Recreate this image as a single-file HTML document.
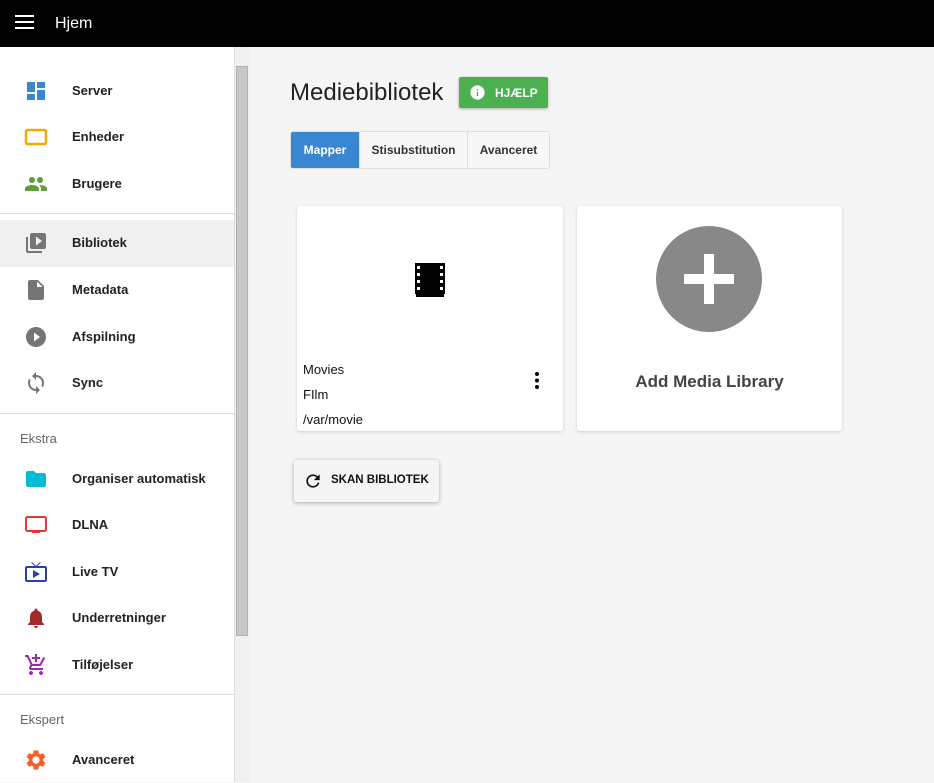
<!DOCTYPE html>
<html><head><meta charset="utf-8"><style>
*{box-sizing:border-box;margin:0;padding:0}
body{width:934px;height:782px;overflow:hidden;font-family:"Liberation Sans",sans-serif;background:#f5f5f5;position:relative}
.top{position:absolute;left:0;top:0;width:934px;height:47px;background:#000;color:#fff}
.top .t{position:absolute;left:55px;top:15px;font-size:16px}
.side{position:absolute;left:0;top:47px;width:234px;height:735px;background:#fff}
.sb{position:absolute;left:234px;top:47px;width:16px;height:735px;background:#f0f0f0;border-left:1px solid #ddd}
.thumb{position:absolute;left:236px;top:66px;width:12px;height:570px;background:#c8c8c8;border:1px solid #b0b0b0}
.it{position:absolute;left:0;width:234px;height:46px}
.it .ic{position:absolute;left:24px;top:11px;width:24px;height:24px}
.it span{position:absolute;left:72px;top:15px;font-size:13px;font-weight:bold;color:#222}
.hl{background:#f0f0f0}
.dv{position:absolute;left:0;width:234px;height:1px;background:#ddd}
.hd{position:absolute;left:20px;font-size:13px;color:#666}
h1{position:absolute;left:290px;top:79px;font-size:24px;font-weight:normal;color:#222}
.help{position:absolute;left:459px;top:77px;width:89px;height:31px;background:#4caf50;color:#fff;font-size:12px;font-weight:bold;border-radius:2px;box-shadow:0 1px 3px rgba(0,0,0,.3)}
.help span{position:absolute;left:36px;top:9px}
.tabs{position:absolute;left:290px;top:131px;height:38px;border:1px solid #ddd;border-radius:3px;background:#f7f7f7;display:flex;font-size:12px;font-weight:bold;color:#333}
.tabs div{line-height:36px;text-align:center;border-right:1px solid #ddd}
.card{position:absolute;background:#fff;border-radius:3px;box-shadow:0 1px 3px rgba(0,0,0,.15)}
.ct{position:absolute;left:6px;font-size:13px;color:#111}
.scan{position:absolute;left:294px;top:460px;width:145px;height:42px;background:#f5f5f5;border-radius:2px;box-shadow:0 1px 4px rgba(0,0,0,.3);font-size:11.5px;font-weight:bold;color:#111}
</style></head><body>
<div class="top">
<svg style="position:absolute;left:15px;top:14px" width="20" height="16"><rect y="1" width="19" height="2" fill="#fff"/><rect y="7" width="19" height="2" fill="#fff"/><rect y="13" width="19" height="2" fill="#fff"/></svg>
<div class="t">Hjem</div></div>
<div class="side">
<div class="it" style="top:21px"><svg class="ic" viewBox="0 0 24 24"><path fill="#3a87d1" d="M3 13h8V3H3v10zm0 8h8v-6H3v6zm10 0h8V11h-8v10zm0-18v6h8V3h-8z"/></svg><span>Server</span></div>
<div class="it" style="top:67px"><svg class="ic" viewBox="0 0 24 24"><rect x="2" y="5" width="20" height="14" rx="1.5" fill="none" stroke="#f0a800" stroke-width="2.5"/></svg><span>Enheder</span></div>
<div class="it" style="top:114px"><svg class="ic" viewBox="0 0 24 24"><path fill="#5c9e3a" d="M16 11c1.66 0 3-1.34 3-3s-1.34-3-3-3-3 1.340-3 3 1.34 3 3 3zm-8 0c1.66 0 3-1.34 3-3S9.66 5 8 5 5 6.34 5 8s1.34 3 3 3zm0 2c-2.33 0-7 1.17-7 3.5V19h14v-2.5c0-2.33-4.67-3.5-7-3.5zm8 0c-.29 0-.62.02-.97.05 1.16.84 1.970 1.97 1.97 3.45V19h6v-2.5c0-2.33-4.67-3.5-7-3.5z"/></svg><span>Brugere</span></div>
<div class="dv" style="top:166px"></div>
<div class="it hl" style="top:173px;height:47px"><svg class="ic" viewBox="0 0 24 24"><path fill="#757575" d="M4 6H2v14c0 1.1.9 2 2 2h14v-2H4V6zm16-4H8c-1.1 0-2 .9-2 2v12c0 1.1.9 2 2 2h12c1.1 0 2-.9 2-2V4c0-1.1-.9-2-2-2zm-8 12.5v-9l6 4.5-6 4.5z"/></svg><span>Bibliotek</span></div>
<div class="it" style="top:220px"><svg class="ic" viewBox="0 0 24 24"><path fill="#757575" d="M6 2c-1.1 0-2 .9-2 2v16c0 1.1.9 2 2 2h12c1.1 0 2-.9 2-2V8l-6-6H6zm7 7V3.5L18.5 9H13z"/></svg><span>Metadata</span></div>
<div class="it" style="top:267px"><svg class="ic" viewBox="0 0 24 24"><path fill="#757575" d="M12 2C6.48 2 2 6.48 2 12s4.48 10 10 10 10-4.48 10-10S17.52 2 12 2zm-2 14.5v-9l6 4.5-6 4.5z"/></svg><span>Afspilning</span></div>
<div class="it" style="top:313px"><svg class="ic" viewBox="0 0 24 24"><path fill="#757575" d="M12 4V1L8 5l4 4V6c3.31 0 6 2.69 6 6 0 1.01-.25 1.97-.7 2.8l1.46 1.46C19.54 15.03 20 13.57 20 12c0-4.42-3.58-8-8-8zm0 14c-3.31 0-6-2.69-6-6 0-1.010.25-1.97.7-2.8L5.24 7.74C4.46 8.97 4 10.43 4 12c0 4.42 3.58 8 8 8v3l4-4-4-4v3z"/></svg><span>Sync</span></div>
<div class="dv" style="top:366px"></div>
<div class="hd" style="top:384px">Ekstra</div>
<div class="it" style="top:409px"><svg class="ic" viewBox="0 0 24 24"><path fill="#00bcd4" d="M10 4H4c-1.1 0-2 .9-2 2v12c0 1.1.9 2 2 2h16c1.1 0 2-.9 2-2V8c0-1.1-.9-2-2-2h-8l-2-2z"/></svg><span>Organiser automatisk</span></div>
<div class="it" style="top:455px"><svg class="ic" viewBox="0 0 24 24"><rect x="2" y="4" width="20" height="14" rx="1.5" fill="none" stroke="#e53935" stroke-width="2"/><rect x="8" y="18" width="8" height="2" fill="#e53935"/></svg><span>DLNA</span></div>
<div class="it" style="top:502px"><svg class="ic" viewBox="0 0 24 24"><path fill="#2c3ea8" d="M21 6h-7.59l3.29-3.29L16 2l-4 4-4-4-.71.71L10.59 6H3c-1.1 0-2 .89-2 2v12c0 1.1.9 2 2 2h18c1.1 0 2-.9 2-2V8c0-1.11-.9-2-2-2zm0 14H3V8h18v12zM9 10v8l7-4z"/></svg><span>Live TV</span></div>
<div class="it" style="top:548px"><svg class="ic" viewBox="0 0 24 24"><path fill="#a52a2a" d="M12 22c1.1 0 2-.9 2-2h-4c0 1.1.89 2 2 2zm6-6v-5c0-3.07-1.64-5.64-4.5-6.32V4c0-.83-.67-1.5-1.5-1.5s-1.5.67-1.5 1.5v.68C7.63 5.36 6 7.92 6 11v5l-2 2v1h16v-1l-2-2z"/></svg><span>Underretninger</span></div>
<div class="it" style="top:595px"><svg class="ic" viewBox="0 0 24 24"><path fill="#9c27b0" d="M11 9h2V6h3V4h-3V1h-2v3H8v2h3v3zm-4 9c-1.1 0-1.99.9-1.99 2S5.9 22 7 22s2-.9 2-2-.9-2-2-2zm10 0c-1.1 0-1.99.9-1.990 2s.89 2 1.99 2 2-.9 2-2-.9-2-2-2zm-9.83-3.25l.03-.12.9-1.63h7.45c.75 0 1.41-.41 1.75-1.03l3.86-7.01L19.42 4h-.01l-1.1 2-2.76 5H8.53l-.13-.27L6.16 6l-.95-2-.94-2H1v2h2l3.6 7.59-1.35 2.45c-.16.28-.25.61-.25.96 0 1.1.9 2 2 2h12v-2H7.42c-.13 0-.25-.11-.25-.25z"/></svg><span>Tilføjelser</span></div>
<div class="dv" style="top:647px"></div>
<div class="hd" style="top:665px">Ekspert</div>
<div class="it" style="top:690px"><svg class="ic" viewBox="0 0 24 24"><path fill="#f4622a" d="M19.14 12.94c.04-.3.06-.61.06-.94 0-.32-.02-.64-.07-.94l2.03-1.58a.49.49 0 0 0 .12-.61l-1.92-3.32a.488.488 0 0 0-.59-.22l-2.39.96c-.5-.38-1.03-.7-1.62-.94l-.36-2.54a.484.484 0 0 0-.48-.41h-3.84c-.24 0-.43.17-.47.41l-.36 2.54c-.59.24-1.13.57-1.62.94l-2.39-.96c-.22-.08-.47 0-.59.22L2.74 8.87c-.12.21-.08.47.12.61l2.03 1.58c-.05.3-.09.63-.09.94s.02.64.07.94l-2.03 1.58a.49.49 0 0 0-.12.61l1.920 3.32c.12.22.37.29.59.22l2.39-.96c.5.38 1.03.7 1.62.94l.36 2.54c.05.24.24.41.48.41h3.84c.24 0 .44-.17.47-.41l.36-2.54c.59-.24 1.13-.56 1.62-.94l2.39.96c.22.08.47 0 .59-.22l1.92-3.32c.12-.22.07-.47-.12-.61l-2.01-1.58zM12 15.6c-1.98 0-3.6-1.62-3.6-3.6s1.62-3.6 3.6-3.6 3.6 1.62 3.6 3.6-1.62 3.6-3.6 3.6z"/></svg><span>Avanceret</span></div>
</div>
<div class="sb"></div><div class="thumb"></div>
<h1>Mediebibliotek</h1>
<div class="help"><svg style="position:absolute;left:10px;top:7px" width="17" height="17" viewBox="0 0 24 24"><path fill="#fff" d="M12 2C6.48 2 2 6.48 2 12s4.48 10 10 10 10-4.48 10-10S17.52 2 12 2zm1 15h-2v-6h2v6zm0-8h-2V7h2v2z"/></svg><span>HJÆLP</span></div>
<div class="tabs"><div style="width:69px;background:#3a87d1;color:#fff;border-radius:2px 0 0 2px">Mapper</div><div style="width:108px">Stisubstitution</div><div style="width:81px;border-right:none">Avanceret</div></div>
<div class="card" style="left:297px;top:206px;width:266px;height:225px">
<svg style="position:absolute;left:117px;top:56px" width="32" height="36" viewBox="0 0 32 36"><rect x="1" y="1" width="30" height="34" fill="#000"/><g fill="#fff"><rect x="3" y="4" width="3" height="3"/><rect x="3" y="11" width="3" height="3"/><rect x="3" y="18" width="3" height="3"/><rect x="3" y="25" width="3" height="3"/><rect x="26" y="4" width="3" height="3"/><rect x="26" y="11" width="3" height="3"/><rect x="26" y="18" width="3" height="3"/><rect x="26" y="25" width="3" height="3"/><rect x="1" y="32" width="1" height="3"/><rect x="30" y="32" width="1" height="3"/></g></svg>
<div class="ct" style="top:156px">Movies</div><div class="ct" style="top:181px">FIlm</div><div class="ct" style="top:206px">/var/movie</div>
<svg style="position:absolute;left:238px;top:166px" width="4" height="17"><circle cx="2" cy="2" r="2"/><circle cx="2" cy="8.5" r="2"/><circle cx="2" cy="15" r="2"/></svg>
</div>
<div class="card" style="left:577px;top:206px;width:265px;height:225px">
<svg style="position:absolute;left:79px;top:20px" width="106" height="106" viewBox="0 0 106 106"><circle cx="53" cy="53" r="53" fill="#888"/><rect x="48" y="28" width="10" height="50" fill="#fff"/><rect x="28" y="48" width="50" height="10" fill="#fff"/></svg>
<div style="position:absolute;left:0;width:265px;top:166px;text-align:center;font-size:17px;font-weight:bold;color:#444">Add Media Library</div>
</div>
<div class="scan"><svg style="position:absolute;left:9px;top:11px" width="20" height="20" viewBox="0 0 24 24"><path fill="#111" d="M17.65 6.35A7.958 7.958 0 0 0 12 4c-4.42 0-7.99 3.58-7.99 8s3.57 8 7.99 8c3.73 0 6.84-2.55 7.73-6h-2.08A5.99 5.99 0 0 1 12 18c-3.31 0-6-2.69-6-6s2.69-6 6-6c1.66 0 3.14.69 4.22 1.78L13 11h7V4l-2.35 2.35z"/></svg><span style="position:absolute;left:37px;top:14px">SKAN BIBLIOTEK</span></div>
</body></html>
